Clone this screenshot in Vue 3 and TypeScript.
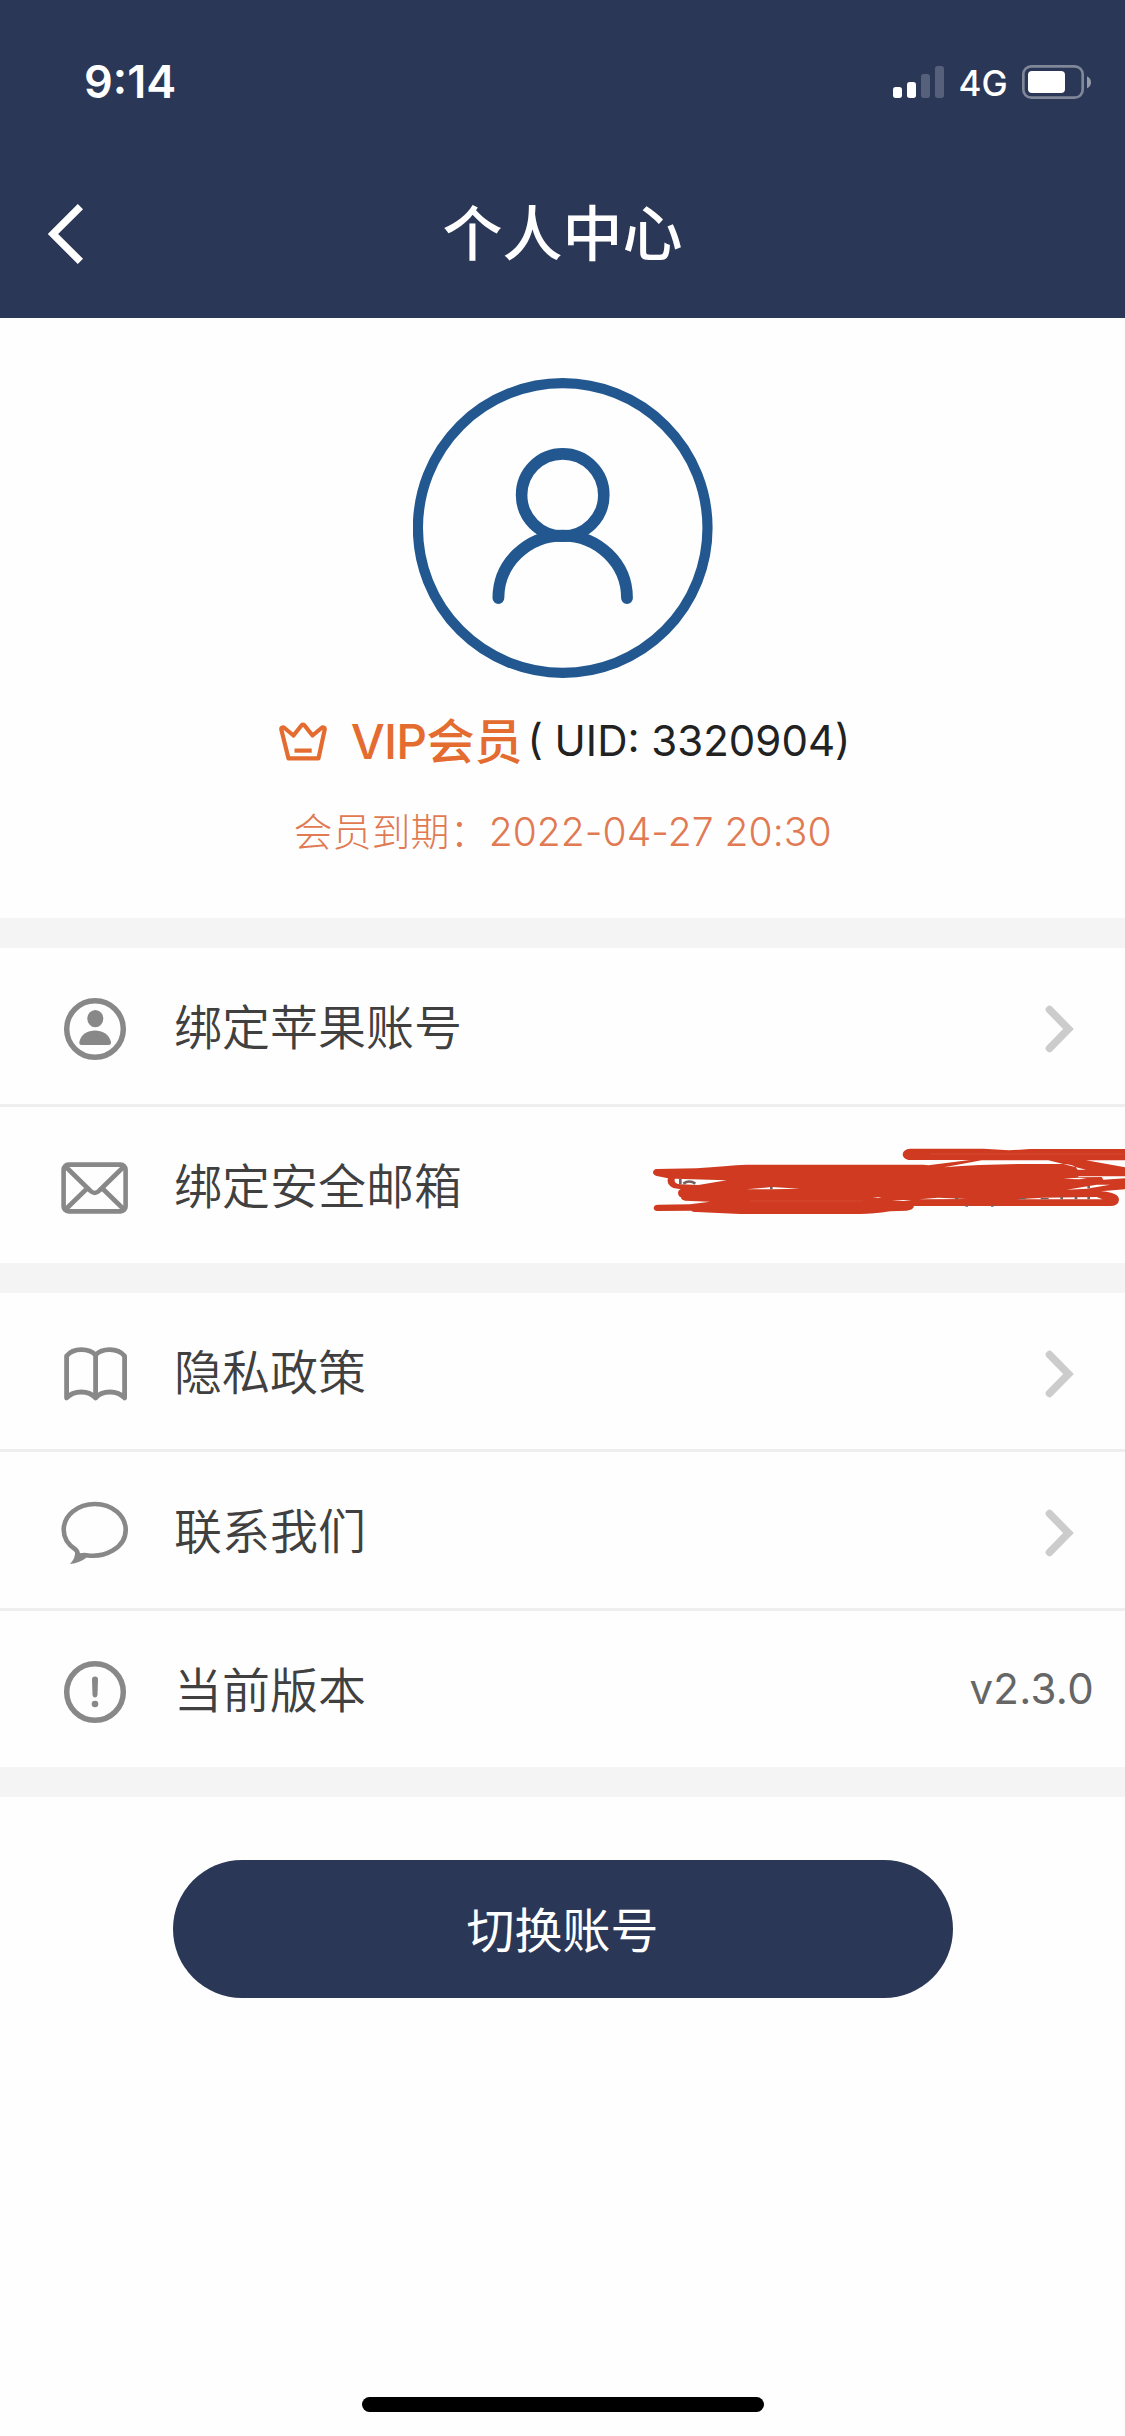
<script setup lang="ts">
interface Row {
  icon: 'account' | 'mail' | 'book' | 'chat' | 'info'
  label: string
  arrow?: boolean
  value?: string
  masked?: boolean
}

const groups: Row[][] = [
  [
    { icon: 'account', label: '绑定苹果账号', arrow: true },
    { icon: 'mail', label: '绑定安全邮箱', masked: true },
  ],
  [
    { icon: 'book', label: '隐私政策', arrow: true },
    { icon: 'chat', label: '联系我们', arrow: true },
    { icon: 'info', label: '当前版本', value: 'v2.3.0' },
  ],
]
</script>

<template>
  <div class="screen">
    <header class="header">
      <div class="status">
        <span class="time">9:14</span>
        <div class="status-right">
          <svg class="signal" viewBox="0 0 153 96">
            <rect x="0" y="63" width="27" height="33" rx="8" fill="#fff" />
            <rect x="42" y="48" width="27" height="48" rx="8" fill="#fff" />
            <rect x="84" y="24" width="27" height="72" rx="8" fill="#56607a" />
            <rect x="126" y="0" width="27" height="96" rx="8" fill="#56607a" />
          </svg>
          <span class="network">4G</span>
          <svg class="battery" viewBox="0 0 207 102">
            <rect x="4" y="4" width="178" height="94" rx="24" fill="none" stroke="#808799" stroke-width="8" />
            <rect x="18" y="18" width="111" height="66" rx="12" fill="#fff" />
            <path d="M195 34 Q207 40 207 52 Q207 64 195 70 Z" fill="#959baa" />
          </svg>
        </div>
      </div>
      <div class="nav">
        <svg class="back" viewBox="0 0 36 60">
          <path d="M32.4 2.6 L5 30 L32.4 57.4" fill="none" stroke="#fff" stroke-width="7.4" />
        </svg>
        <h1 class="title">个人中心</h1>
      </div>
    </header>

    <section class="profile">
      <svg class="avatar" viewBox="0 0 300 300" fill="none" stroke="#22588f">
        <circle cx="149.700" cy="150" r="144.800" stroke-width="10.200" />
        <circle cx="149.700" cy="117" r="41.100" stroke-width="11.600" />
        <path d="M85.400 220 A64.300 62.500 0 0 1 214 220" stroke-width="11.800" stroke-linecap="round" />
      </svg>
      <div class="member">
        <svg class="crown" viewBox="0 0 48 40" fill="none" stroke="#e46c30" stroke-width="4.200" stroke-linejoin="round">
          <path d="M9.500 36.400 H39.500 L45.700 7.500 C46 5 43.500 5 42.500 6 L33.500 13.500 L26 4 Q24 1 22 4 L14.500 13.500 L5.500 6 C4.500 5 2 5 2.300 7.500 Z" />
          <path d="M15.500 28.600 H32.700" />
        </svg>
        <span class="vip"><span class="vip-latin">VIP</span>会员</span>
        <span class="uid">( UID: 3320904)</span>
      </div>
      <div class="expiry"><span>会员到期：</span><span class="date">2022-04-27 20:30</span></div>
    </section>

    <section v-for="(rows, g) in groups" :key="g" class="group">
      <div v-for="row in rows" :key="row.icon" class="row">
        <svg v-if="row.icon === 'account'" class="icon" viewBox="0 0 72 72">
          <circle cx="36" cy="36" r="28.300" class="line" />
          <ellipse cx="36.300" cy="25.700" rx="8" ry="8.600" fill="#888" />
          <path d="M22.500 52 Q20 52 20.300 49 C22 41 29 37.500 36 37.500 S50 41 52 49 Q52.200 52 49.500 52 Z" fill="#888" />
        </svg>
        <svg v-else-if="row.icon === 'mail'" class="icon" viewBox="0 0 72 72">
          <rect x="4.600" y="12.600" width="62" height="46.800" rx="5" class="line mail" />
          <path d="M6 14 L31 38.500 Q35.700 43.500 40.400 38.500 L65.500 14 M6 58 L27 37.500 M65.500 58 L44.500 37.500" class="line mail" />
        </svg>
        <svg v-else-if="row.icon === 'book'" class="icon" viewBox="0 0 72 72">
          <path d="M36.600 17 C30 10 14.500 9.500 7.600 18 V60 C14.500 52 30 52 36.600 60 C43 52 58.500 52 65.600 60 V18 C58.500 9.500 43 10 36.600 17 V60" class="line book" />
        </svg>
        <svg v-else-if="row.icon === 'chat'" class="icon" viewBox="0 0 72 72">
          <path d="M36 7 C18.500 7 4.700 18.500 4.700 32.800 C4.700 41.500 9.500 48 16.500 52.500 Q19.500 55 18.500 60 Q22.500 57.500 27.500 58.200 C45 61 66.700 51.500 66.700 32.800 C66.700 18.500 53 7 36 7 Z" class="line chat" />
          <path d="M16 54 Q17 60.500 11 67 Q21 66 28 60.300 L20 56 Z" fill="#888" />
        </svg>
        <svg v-else class="icon" viewBox="0 0 72 72">
          <circle cx="36" cy="36" r="28.300" class="line" />
          <path d="M33 23.500 Q33 20.500 36 20.500 T39 23.500 L38.500 39 Q38 41.500 36 41.500 T33.500 39 Z" fill="#888" />
          <circle cx="36" cy="48" r="3.300" fill="#888" />
        </svg>

        <span class="label">{{ row.label }}</span>

        <svg v-if="row.arrow" class="arrow" viewBox="0 0 30 48">
          <path d="M4.500 4.600 L23.500 24 L4.500 43.400" fill="none" stroke="#ccc" stroke-width="7.600" stroke-linecap="round" />
        </svg>
        <span v-if="row.value" class="value">{{ row.value }}</span>

        <!-- hand-drawn marker over the mail address -->
        <svg v-if="row.masked" class="scribble" viewBox="0 0 1485 360">
          <path fill="#cf3a20" d="M80 147 L200 145 Q290 137 350 134 H880 L895 136 L1020 120 H835 Q818 116 818 102 Q820 88 840 86 H1060 L1137 91 L1200 87 H1485 V121 H1368 L1485 142 V208 L1412 214 Q1467 217 1467 240 Q1465 258 1440 258 H852 Q850 270 830 272 L780 274 Q730 282 690 282 H330 L200 276 Q186 276 184 272 L82 273 Q71 272 71 264 Q72 254 84 254 L180 253 L240 245 L165 242 Q153 240 153 232 Q144 228 144 218 Q144 211 152 208 L130 204 Q108 192 114 175 L84 169 Q69 166 69 157 Q70 148 80 147 Z" />
          <g fill="#fff">
            <path d="M942 142 L1055 121 H1255 L1368 149 H1343 Q1335 133 1300 132 H1180 Q1050 133 942 142 Z" />
            <path d="M134 176 L290 181 L205 195 L150 193 Q131 191 134 176 Z" />
            <path d="M350 208 L425 201 L510 206 L425 208 Z" />
            <path d="M868 238 L925 233 L1010 237 Z" />
            <path d="M1310 209 L1400 194 L1440 194 L1370 206 Z" />
            <path d="M1345 169 H1485 V175 L1420 179 L1415 171 L1345 172 Z" />
            <path d="M1300 176 L1345 173 L1370 176 L1345 178 Z" />
            <path d="M1160 238 L1240 233 L1400 231 L1418 238 Z" />
            <path d="M785 243 L820 240 L845 243 Z" />
            <path d="M728 233 L745 231 L755 233 Z" />
          </g>
          <path d="M360 243 H700 M900 102 H1480" stroke="#d9543a" stroke-width="2" />
          <path fill="none" stroke="#76605c" stroke-width="8" d="M151 177 V193 M160 191 Q178 178 196 191 M424 200 V208 M1010 255 V260 M1087 255 V260 M1295 230 V238 M1338 230 V238 M1376 230 V238 M1376 198 V205" />
          <path stroke="#76605c" stroke-width="4" d="M1167 236 H1187 M1232 236 H1256 M975 235 H985" />
        </svg>
      </div>
    </section>

    <main class="actions">
      <button class="switch" type="button">切换账号</button>
    </main>
    <div class="home-bar"></div>
  </div>
</template>

<style>
body {
  margin: 0;
  background: #fff;
}
</style>

<style scoped>
.screen {
  width: 1125px;
  height: 2436px;
  display: flex;
  flex-direction: column;
  overflow: hidden;
  background: #fefefe;
  font-family: Inter, "Noto Sans CJK SC", sans-serif;
}
.header {
  height: 318px;
  flex: none;
  background: #2b3756;
  color: #fff;
}
.status {
  height: 150px;
  display: flex;
  justify-content: space-between;
  align-items: center;
  padding: 14px 34px 0 84px;
  box-sizing: border-box;
}
.time {
  font-size: 45px;
  font-weight: 600;
  line-height: 56px;
}
.status-right {
  display: flex;
  align-items: center;
}
.signal {
  width: 51px;
  height: 32px;
}
.network {
  width: 78px;
  text-align: center;
  font-size: 35px;
  font-weight: 500;
  line-height: 42px;
  padding-top: 2px;
}
.battery {
  width: 69px;
  height: 34px;
}
.nav {
  height: 168px;
  display: grid;
  grid-template-columns: 150px 1fr 150px;
  align-items: center;
}
.back {
  width: 36px;
  height: 60px;
  margin-left: 48px;
}
.title {
  margin: 0;
  text-align: center;
  font-size: 60px;
  font-weight: 500;
  line-height: 84px;
}
.profile {
  height: 600px;
  flex: none;
  box-sizing: border-box;
  padding-top: 60px;
  display: flex;
  flex-direction: column;
  align-items: center;
}
.avatar {
  width: 300px;
  height: 300px;
}
.member {
  display: flex;
  align-items: center;
  height: 72px;
  margin-top: 28px;
  padding-left: 4px;
  white-space: pre;
}
.crown {
  width: 48px;
  height: 40px;
  margin-right: 24px;
}
.vip {
  font-size: 48px;
  font-weight: 500;
  color: #e46c30;
  line-height: 72px;
}
.vip-latin {
  letter-spacing: -0.7px;
}
.uid {
  font-size: 42px;
  color: #222;
  line-height: 68px;
  padding-bottom: 2px;
  margin-left: 5px;
}
.expiry {
  display: flex;
  align-items: center;
  margin-top: 25px;
  height: 58px;
  font-size: 39px;
  font-weight: 300;
  line-height: 58px;
  color: #e17a52;
  letter-spacing: 0.05px;
}
.group {
  flex: none;
  border-top: 30px solid #f4f4f4;
}
.group + .actions {
  border-top: 30px solid #f4f4f4;
}
.row {
  position: relative;
  height: 156px;
  display: flex;
  align-items: center;
  padding: 0 31px 0 59px;
}
.row + .row {
  border-top: 3px solid #eee;
}
.icon {
  width: 72px;
  height: 72px;
  margin-top: 6px;
}
.line {
  fill: none;
  stroke: #888;
  stroke-width: 5.5px;
  stroke-linejoin: round;
}
.mail,
.chat {
  stroke-width: 4.6px;
}
.book {
  stroke-width: 4.8px;
}
.label {
  flex: 1;
  margin-left: 43px;
  padding-top: 3px;
  font-size: 48px;
  font-weight: 350;
  line-height: 72px;
  color: #404040;
}
.arrow {
  width: 30px;
  height: 48px;
  margin-top: 6px;
  margin-right: 19px;
}
.value {
  font-size: 42px;
  letter-spacing: 0.3px;
  line-height: 60px;
  color: #666;
}
.scribble {
  position: absolute;
  right: 0;
  top: 13px;
  width: 495px;
  height: 120px;
}
.actions {
  flex: 1;
  display: flex;
  justify-content: center;
  align-items: flex-start;
  padding-top: 63px;
}
.switch {
  width: 780px;
  height: 138px;
  border: 0;
  padding: 3px 0 0;
  border-radius: 69px;
  background: #2b3756;
  color: #fff;
  font-family: inherit;
  font-size: 48px;
  font-weight: 400;
  line-height: 72px;
}
.home-bar {
  flex: none;
  width: 402px;
  height: 15px;
  margin: 0 auto 24px;
  border-radius: 8px;
  background: #000;
}
</style>
